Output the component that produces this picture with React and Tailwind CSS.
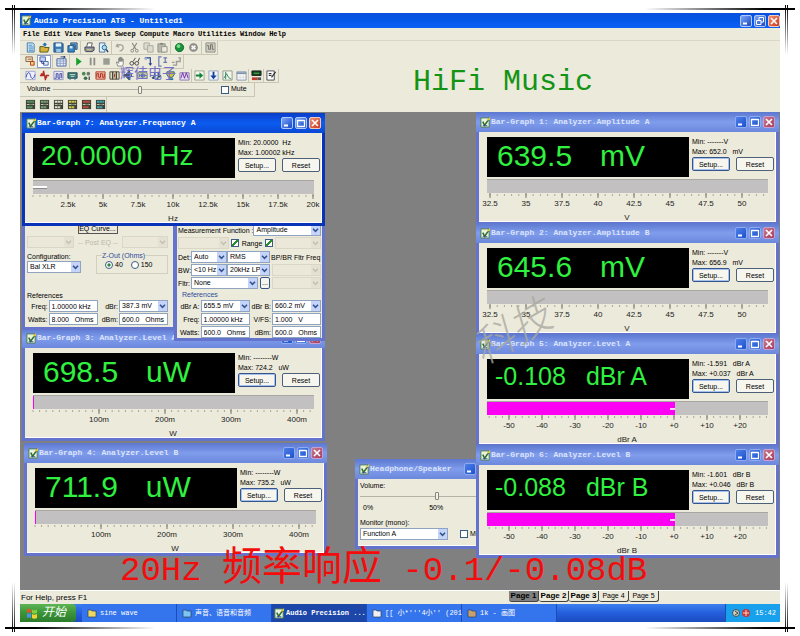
import { useState } from 'react';

// Small toolbar drawings, all on a 12x12 grid
const ICONS = {
  doc: (
    <>
      <path d="M2.5 1h6l1.5 1.5V11h-7.500z" fill="#d7ecf8" stroke="#3b76a8" />
      <path d="M4 3.500h4M4 5.500h5M4 7.500h5M4 9.500h5" stroke="#3f86c0" />
    </>
  ),
  open: (
    <>
      <path d="M1 5h4l1 1h5l-1.500 5H1z" fill="#d8b23c" stroke="#4b5a1c" />
      <path d="M5 4.500V3h-1.500L6.500 0.500 9 3H7.500v2z" fill="#2374b5" />
    </>
  ),
  save: (
    <>
      <path d="M1 1h9l1 1v9H1z" fill="#3a78b4" stroke="#1e4d7c" />
      <path d="M3 1.500h6V5H3z" fill="#e8f4fb" />
      <path d="M3.500 7.500h5V11h-5z" fill="#9cc7e2" />
    </>
  ),
  saveAll: (
    <>
      <path d="M4 1h7v7H9V3H4z" fill="#7fb2d6" stroke="#1e4d7c" />
      <path d="M1 4h7v7H1z" fill="#3a88c4" stroke="#1e4d7c" />
      <path d="M3 4.500h3V7H3z" fill="#d8eefa" />
    </>
  ),
  print: (
    <>
      <path d="M3 5l1-4h5l-1 4" fill="#fff" stroke="#555" />
      <path d="M1 5.500h10V9l-2 1.500H2L1 9z" fill="#8d93a0" stroke="#3c4150" />
      <path d="M3 8.500h5" stroke="#f0d860" />
    </>
  ),
  preview: (
    <>
      <path d="M1.500 1h6v10h-6z" fill="#e4f1fa" stroke="#4a6f96" />
      <circle cx="7" cy="6" r="2.500" fill="#a9dcf2" stroke="#246a9a" />
      <path d="M9 8l2 3" stroke="#243f5c" strokeWidth="1.500" />
    </>
  ),
  undo: <path d="M3 2L1.500 4.500 4.500 5.500M2 4.500C5 2 9 3 9 6S7 9.500 5 10" fill="none" stroke="#a5a69c" strokeWidth="1.500" />,
  cut: (
    <>
      <path d="M3.500 1l4 7M8.500 1l-4 7" stroke="#85867e" strokeWidth="1.200" />
      <circle cx="3.500" cy="9.500" r="1.500" fill="none" stroke="#85867e" />
      <circle cx="8.500" cy="9.500" r="1.500" fill="none" stroke="#85867e" />
    </>
  ),
  copy: (
    <>
      <path d="M1 1h6v7H1z" fill="#dddbce" stroke="#a9a99f" />
      <path d="M5 4h6v7H5z" fill="#dddbce" stroke="#a9a99f" />
    </>
  ),
  paste: (
    <>
      <path d="M1 2h8v9H1z" fill="#b9b8ac" stroke="#93938a" />
      <path d="M5 5h6v6H5z" fill="#eceadc" stroke="#93938a" />
      <path d="M3.500 1h3v2h-3z" fill="#85867e" />
    </>
  ),
  go: (
    <>
      <circle cx="6" cy="6" r="4.500" fill="#17913a" stroke="#0c6a2a" />
      <circle cx="5" cy="4.500" r="2" fill="#7fdc86" />
    </>
  ),
  stopRound: (
    <>
      <circle cx="6" cy="6" r="4" fill="#a4a49a" stroke="#85867e" strokeWidth="1.500" />
      <path d="M4 4l4 4M8 4l-4 4" stroke="#fff" strokeWidth="1.500" />
    </>
  ),
  gridWave: (
    <>
      <path d="M1 1h10v10H1z" fill="#cfcdc0" stroke="#8d8d84" />
      <path d="M2 4h2v4h2V3h2v5h2" fill="none" stroke="#6d6d66" />
    </>
  ),
  link: (
    <>
      <path d="M1 1h7v5H1z" fill="#f2e2c0" stroke="#8a5a3a" />
      <path d="M6 6h4v4H6z" fill="#f2d070" stroke="#b03a20" />
      <path d="M3 3.500h4" stroke="#8a5a3a" />
    </>
  ),
  linkBlue: (
    <>
      <path d="M1 1h6v5H1z" fill="#c4d0f0" stroke="#4a65a8" />
      <path d="M5 6h5v4H5z" fill="#e8eefa" stroke="#4a65a8" />
      <path d="M3 5v3h3" fill="none" stroke="#1f3e9a" />
    </>
  ),
  sheet: (
    <>
      <path d="M1 3h10v8H1z" fill="#e4ebf8" stroke="#46619c" />
      <path d="M1 5.500h10M1 8h10M4.500 3v8M8 3v8" stroke="#7087b8" strokeWidth="0.700" />
      <path d="M5 1h5l-2-1M10 1L8 2.500" stroke="#1f3e7a" fill="none" />
    </>
  ),
  play: <path d="M3.500 1.500L9.500 6l-6 4.500z" fill="#15a02c" />,
  pause: <path d="M3 2h2v8H3zM7 2h2v8H7z" fill="#8f9088" />,
  stop: <path d="M2.500 2.500h7v7h-7z" fill="#9a9b92" />,
  hand: <path d="M3 11L1.500 6.500h1L4 8V2.500h1.200V6V1.500h1.300V6V2h1.200v4V3.500H9V9l-1 2z" fill="#fafaf4" stroke="#6c6c68" strokeWidth="0.800" />,
  glasses: (
    <>
      <circle cx="3" cy="8" r="2" fill="none" stroke="#444" />
      <circle cx="8.500" cy="8" r="2" fill="none" stroke="#444" />
      <path d="M4.500 6L7 2M10 6l1.500-4M5 8h1.500" stroke="#444" />
    </>
  ),
  step: (
    <>
      <path d="M2 2h6v3M8 5v4" fill="none" stroke="#29459c" strokeWidth="1.300" />
      <path d="M6 8h4l-2 3z" fill="#29459c" />
      <circle cx="3" cy="3" r="1.500" fill="#a8b4d8" />
    </>
  ),
  bracket: <path d="M5 1H2v10h3M7 2h4M9 2v5M7 7h4" fill="none" stroke="#6a78b4" strokeWidth="1.300" />,
  jump: <path d="M2 10h4V6h4V2M8 2h3M1 7h3" fill="none" stroke="#9a9c98" strokeWidth="1.500" />,
  sine: (
    <>
      <path d="M1 1.500h10v9H1z" fill="#eef0fa" stroke="#9fa6cf" />
      <path d="M1 8C3 1 5 2 6 6s3 5 5-1" fill="none" stroke="#2f3fae" />
    </>
  ),
  spikes: <path d="M1 6h3l1-5 2 10 1-5h3M2 4l7 4" fill="none" stroke="#b52a22" strokeWidth="1.400" />,
  square: (
    <>
      <path d="M1 1.500h10v9H1z" fill="#e8e8f6" stroke="#8b90c0" />
      <path d="M1.500 9h2V4h2v5h2V4h2v5" fill="none" stroke="#3c3fa0" />
    </>
  ),
  speakerBox: (
    <>
      <path d="M1 3h10v6H1z" fill="#3d7a80" stroke="#254a50" />
      <path d="M3 5h6M4 7h4" stroke="#c9e2c2" />
      <path d="M4 9l-1 2M8 9l1 2" stroke="#2a6fa0" />
    </>
  ),
  dots: (
    <>
      <circle cx="3" cy="4" r="2" fill="#4c8a50" />
      <circle cx="8" cy="4" r="2" fill="#6c7a70" />
      <circle cx="5" cy="9" r="2" fill="#3a6f4c" />
      <path d="M9 7v4" stroke="#4d5a54" strokeWidth="1.500" />
    </>
  ),
  redWave: (
    <>
      <path d="M1 2h10v8H1z" fill="#e9bfa8" stroke="#b23c28" />
      <path d="M2 8V4h2v4h2V4h2v4h2V4" fill="none" stroke="#b2241a" />
    </>
  ),
  film: (
    <>
      <path d="M1 2h10v8H1z" fill="#e4ddc4" stroke="#4b4438" />
      <path d="M4 2v8M8 2v8" stroke="#4b4438" strokeWidth="1.500" />
      <path d="M6 4v4" stroke="#a03420" />
    </>
  ),
  horn: <path d="M1 5h2l4-4v10L3 7H1zM8.500 4c1 1 1 3 0 4" fill="#445a68" stroke="#2b3d48" />,
  digits: (
    <>
      <path d="M1 3h10v6H1z" fill="#dfe4dc" stroke="#667060" />
      <path d="M3 4.500v3M5 4.500h1.500v3H5zM8.500 4.500v3" fill="none" stroke="#22553a" />
    </>
  ),
  beads: <path d="M1 9l3-2M4 3v5M8 2v6M8 8l3-2M2 9h2M6 9h2" stroke="#2a5560" strokeWidth="1.600" />,
  yellowBox: (
    <>
      <path d="M2 2h8v3l-2 3H4L2 5z" fill="#d8c23c" stroke="#235a8c" />
      <path d="M4 9h5v2H4z" fill="#356f9e" />
    </>
  ),
  purpleWave: (
    <>
      <path d="M1 3h10v8H1z" fill="#e6dcf2" stroke="#8a78b4" />
      <path d="M2 9l2-6 2 6 2-6 2 6" fill="none" stroke="#6b2f9c" />
    </>
  ),
  right: (
    <>
      <path d="M1 1h10v10H1z" fill="#f4f6ea" stroke="#97a58a" />
      <path d="M2 5h4V2.500L10 6 6 9.500V7H2z" fill="#14813a" />
    </>
  ),
  down: (
    <>
      <path d="M1 1h10v10H1z" fill="#eef3fa" stroke="#94a4bd" />
      <path d="M5 2v4H2.500L6 10l3.500-4H7V2z" fill="#123f98" />
    </>
  ),
  graph: (
    <>
      <path d="M1 1h10v10H1z" fill="#f3f5ee" stroke="#8f9b88" />
      <path d="M2 9l3-5 2 4 3 2M4 2v8" fill="none" stroke="#2f8454" />
    </>
  ),
  table: (
    <>
      <path d="M1 2h10v9H1z" fill="#fbfbf6" stroke="#8292ac" />
      <path d="M1 3.500h10" stroke="#8292ac" strokeWidth="2" />
      <path d="M4.500 5v6M8 5v6M1 8h10" stroke="#cdd2da" strokeWidth="0.700" />
    </>
  ),
  meter: (
    <>
      <path d="M1 1h10v5H1z" fill="#14441c" stroke="#222" />
      <path d="M3 3.500h6" stroke="#54c85c" />
      <path d="M1 8h6v3H1z" fill="#c43a2c" />
      <path d="M7 8h4v3H7z" fill="#555" />
    </>
  ),
  note: (
    <>
      <path d="M1 1h8v10H1z" fill="#fff" stroke="#45484c" />
      <path d="M3 4h3M3 6h3M10.500 2L6 8" stroke="#30343a" strokeWidth="1.300" />
    </>
  ),
};

function Icon({ name }) {
  return (
    <svg viewBox="0 0 12 12" className="h-[11px] w-[11px]" aria-hidden="true">
      {ICONS[name]}
    </svg>
  );
}

function PanelIcon({ accent }) {
  return (
    <svg viewBox="0 0 12 12" className="h-[11px] w-[11px]" aria-hidden="true">
      <path d="M1 1h10v10H1z" fill="#3c4036" />
      <path d="M2 3h8M2 9h6" stroke={accent} strokeWidth="2" />
      <path d="M2 6h4M7 6h3" stroke="#c9d4b8" />
      <path d="M5 1v10M8 1v10" stroke="#59604f" strokeWidth="0.700" />
    </svg>
  );
}

function AppIcon() {
  return (
    <svg viewBox="0 0 12 12" className="h-[11px] w-[11px] shrink-0" aria-hidden="true">
      <path d="M1 1h9v10H1z" fill="#e9f2dc" stroke="#4a7a4e" />
      <path d="M3 5l2 4 5-7" fill="none" stroke="#2d6a34" strokeWidth="1.600" />
      <path d="M7 4l4-4v3z" fill="#f0c830" />
      <path d="M3 9.500h5" stroke="#2b4f9c" />
    </svg>
  );
}

const TOOLBARS = {
  file: [
    ['doc', 'open', 'save', 'saveAll'],
    ['print', 'preview'],
    ['undo', 'cut', 'copy', 'paste'],
    ['go', 'stopRound'],
    ['gridWave'],
  ],
  sweep: [
    ['link', 'linkBlue'],
    ['sheet'],
    ['play', 'pause', 'stop', 'hand', 'glasses', 'step', 'bracket', 'jump'],
  ],
  panels: [
    ['sine', 'spikes', 'square', 'speakerBox', 'dots', 'redWave', 'film', 'horn', 'digits', 'beads', 'yellowBox', 'purpleWave'],
    ['right', 'down', 'graph', 'table'],
    ['meter'],
    ['note'],
  ],
};

function Toolbar({ groups, active, tight }) {
  return (
    <div className={`flex h-[14px] w-max items-center border-r border-b border-[#c9c6b4] pl-[3px] ${tight ? '' : 'gap-px'}`}>
      {groups.map((group, i) => (
        <div
          key={i}
          className={`flex items-center ${i > 0 ? 'border-l border-[#c9c6b4]' : ''} ${i > 0 && !tight ? 'pl-px' : ''}`}
        >
          {group.map((name) => (
            <button
              key={name}
              type="button"
              aria-label={name}
              className={`flex h-[13px] w-[14px] items-center justify-center ${
                name === active ? 'border border-[#8a9cc8] bg-white' : ''
              }`}
            >
              <Icon name={name} />
            </button>
          ))}
        </div>
      ))}
    </div>
  );
}

function CaptionButtons({ active, restore }) {
  const blue = active
    ? 'bg-linear-to-br from-[#7ea6f8] to-[#1746c4] border-[#b4c8f8]'
    : 'bg-linear-to-br from-[#4f80e8] to-[#1c50cc] border-[#8eaaf0]';
  const red = active
    ? 'bg-linear-to-br from-[#f09070] to-[#c83418] border-[#f4c8bc]'
    : 'bg-linear-to-br from-[#c87890] to-[#a83c5c] border-[#c8a0d0]';
  return (
    <div className="flex shrink-0 gap-[2px]">
      <button type="button" aria-label="Minimize" className={`h-3 w-3 rounded-[2px] border ${blue}`}>
        <svg viewBox="0 0 10 10" aria-hidden="true"><path d="M2 7.500h4" stroke="#fff" strokeWidth="2" /></svg>
      </button>
      <button type="button" aria-label="Maximize" className={`h-3 w-3 rounded-[2px] border ${blue}`}>
        <svg viewBox="0 0 10 10" fill="none" stroke="#fff" aria-hidden="true">
          {restore ? (
            <path d="M4 4V1.500h4.500V6H6M1.500 4.500H6V8.500H1.500z" />
          ) : (
            <path d="M1.500 2.500h7M1.500 2v6.500h7V2" strokeWidth="1.300" />
          )}
        </svg>
      </button>
      <button type="button" aria-label="Close" className={`h-3 w-3 rounded-[2px] border ${red}`}>
        <svg viewBox="0 0 10 10" aria-hidden="true"><path d="M2 2l6 6M8 2L2 8" stroke="#fff" strokeWidth="1.600" /></svg>
      </button>
    </div>
  );
}

function Window({ title, active, className, children }) {
  return (
    <section
      className={`absolute border-x-[3px] border-b-[3px] ${
        active ? 'border-[#0a34b8]' : 'border-[#6474cc]'
      } ${className}`}
    >
      <header
        className={`-mx-[3px] flex h-5 items-center pr-1 pl-1 font-['Liberation_Mono',monospace] text-[8px] font-bold ${
          active
            ? 'bg-linear-to-b from-[#0a3cc8] via-[#0c5cf0] to-[#0a48d4] text-white'
            : 'bg-linear-to-b from-[#5c78d0] via-[#809cec] to-[#6c88dc] text-[#dce4fc]'
        }`}
      >
        <AppIcon />
        <h2 className="flex-1 whitespace-nowrap">{title}</h2>
        <CaptionButtons active={active} />
      </header>
      <div className="border-r border-b border-white bg-[#eceadb]">{children}</div>
    </section>
  );
}

// Ruler under a bar: major ticks carry labels, minor ticks split each step
function Scale({ labels, start, step, minor, unit }) {
  const gap = step / minor;
  const ticks = [];
  for (let x = start % gap; x <= 281; x += gap) ticks.push(x);
  return (
    <svg viewBox="0 0 281 28" className="block w-[281px] overflow-visible font-['Liberation_Sans',sans-serif] text-[8px]">
      {ticks.map((x) => (
        <path key={x} d={`M${x} 1v2`} stroke="#a8a698" strokeWidth="1" />
      ))}
      {labels.map((label, i) => (
        <g key={label}>
          <path d={`M${start + i * step} 0v5`} stroke="#77766c" strokeWidth="1" />
          <text x={start + i * step} y="13" textAnchor="middle" fill="#222">{label}</text>
        </g>
      ))}
      <text x="140" y="27" textAnchor="middle" fill="#222">{unit}</text>
    </svg>
  );
}

const SCALES = {
  hz: { labels: ['2.5k', '5k', '7.5k', '10k', '12.5k', '15k', '17.5k', '20k'], start: 35, step: 35, minor: 5, unit: 'Hz' },
  volt: { labels: ['32.5', '35', '37.5', '40', '42.5', '45', '47.5', '50'], start: 3, step: 36, minor: 5, unit: 'V' },
  watt: { labels: ['100m', '200m', '300m', '400m'], start: 66, step: 66, minor: 10, unit: 'W' },
  dbrA: { labels: ['-50', '-40', '-30', '-20', '-10', '+0', '+10', '+20'], start: 22, step: 33, minor: 5, unit: 'dBr A' },
  dbrB: { labels: ['-50', '-40', '-30', '-20', '-10', '+0', '+10', '+20'], start: 22, step: 33, minor: 5, unit: 'dBr B' },
};

function PushButton({ children, focused }) {
  return (
    <button
      type="button"
      className={`h-[14px] w-[38px] rounded-[2px] border bg-[#f6f5ee] text-center leading-[11px] ${
        focused ? 'border-[#34558c] ring-1 ring-[#a8c0ec] ring-inset' : 'border-[#4c6078]'
      }`}
    >
      {children}
    </button>
  );
}

function BarGraph({ title, active, value, unit, size, min, max, scale, fill = 0, mark, className }) {
  const sizes = {
    md: 'text-[25px] pl-2 gap-5 leading-[34px]',
    lg: 'text-[28px] pl-2 gap-[17px] leading-[36px]',
    xl: 'text-[30px] pl-[10px] gap-7 leading-[38px]',
  };
  return (
    <Window title={title} active={active} className={`w-[303px] ${className}`}>
      <div className="pt-[5px] pr-px pl-2">
        <div className="flex gap-[3px]">
          <output className={`flex h-10 flex-1 bg-black whitespace-pre text-[#30f040] ${sizes[size]}`}>
            <span>{value}</span>
            <span>{unit}</span>
          </output>
          <div className="w-[82px] text-[7px] leading-[10px]">
            <p className="whitespace-pre">Min: {min}</p>
            <p className="whitespace-pre">Max: {max}</p>
            <div className="flex justify-between">
              <PushButton focused={!active}>Setup...</PushButton>
              <PushButton>Reset</PushButton>
            </div>
          </div>
        </div>
        <div className="mt-[2px] flex h-[14px] w-[281px] items-center border-t border-[#a8a6a0] bg-[#c2c0c0]">
          <div className="flex h-full items-center justify-end bg-[#fc00f4]" style={{ width: `${fill}%` }}>
            {fill > 5 && <span className="h-[2px] w-[5px] bg-[#fcd0fc]" />}
          </div>
          {mark && <span className="h-[3px] w-[14px] border-b border-[#8c8c88] bg-white" />}
        </div>
        <Scale {...scale} />
      </div>
    </Window>
  );
}

function Select({ label, value, disabled, className }) {
  return (
    <span className={`relative inline-flex h-[12px] ${className}`}>
      <select
        aria-label={label}
        disabled={disabled}
        className={`h-full w-full appearance-none overflow-hidden border pl-[2px] leading-[10px] ${
          disabled ? 'border-[#dad7c6] bg-[#ebe8da]' : 'border-[#8ea4c0] bg-white'
        }`}
      >
        <option>{value}</option>
      </select>
      <span
        className={`pointer-events-none absolute inset-y-px right-px flex w-[9px] items-center justify-center ${
          disabled ? 'bg-[#e4e1d2] text-[#c4c1b2]' : 'bg-[#c4d4fa] text-[#34508c]'
        }`}
      >
        <svg viewBox="0 0 8 6" className="h-[5px] w-[7px]" aria-hidden="true">
          <path d="M1 1l3 3 3-3" fill="none" stroke="currentColor" strokeWidth="1.800" />
        </svg>
      </span>
    </span>
  );
}

function Field({ label, value, select }) {
  return (
    <label className="flex items-center justify-end gap-px">
      <span className="whitespace-nowrap">{label}</span>
      {select ? (
        <Select label={label} value={value} className="w-[49px]" />
      ) : (
        <input defaultValue={value} className="h-[12px] w-[49px] border border-[#8ea4c0] bg-white pl-[2px]" />
      )}
    </label>
  );
}

function Tick({ label }) {
  return (
    <input
      type="checkbox"
      aria-label={label}
      defaultChecked
      className="h-2 w-2 appearance-none border border-[#3c5c88] bg-white checked:bg-[linear-gradient(135deg,#fff_35%,#2c8c34_35%,#2c8c34_60%,#fff_60%)]"
    />
  );
}

function GeneratorPanel() {
  return (
    <section className="absolute top-[106px] left-[2px] flex w-[154px] flex-col border-x-[3px] border-b-[3px] border-[#6474cc] bg-[#eceadb] pt-[6px] pr-[5px] pb-[2px] pl-[2px] text-[7px] leading-[9px]">
      <button type="button" className="mx-auto h-[10px] w-[40px] border border-[#555] leading-[8px] whitespace-nowrap">EQ Curve...</button>
      <div className="mt-[2px] flex items-center gap-1 text-[#bbb8a8]">
        <Select label="EQ source" value="" disabled className="w-[51px]" />
        <span className="flex-1 text-center whitespace-nowrap">-- Post EQ --</span>
        <Select label="Post EQ" value="" disabled className="w-[50px]" />
      </div>
      <div className="mt-1 flex justify-between">
        <label className="flex flex-col">
          Configuration:
          <Select label="Configuration" value="Bal XLR" className="w-[54px]" />
        </label>
        <fieldset className="h-[22px] w-[72px] border border-[#d2cfbe] pl-1">
          <legend className="ml-px h-[7px] leading-[7px] text-[#2c4c9c]">Z-Out (Ohms)</legend>
          <div className="flex gap-2 pt-px pl-1">
            <label className="flex items-center gap-[2px]">
              <input type="radio" name="zout" defaultChecked className="h-2 w-2 appearance-none rounded-full border border-[#3c5c88] bg-white checked:bg-[radial-gradient(#2c8c34_35%,#fff_40%)]" />
              40
            </label>
            <label className="flex items-center gap-[2px]">
              <input type="radio" name="zout" className="h-2 w-2 appearance-none rounded-full border border-[#3c5c88] bg-white" />
              150
            </label>
          </div>
        </fieldset>
      </div>
      <p className="mt-[17px]">References</p>
      <div className="grid grid-cols-2 gap-y-px">
        <Field label="Freq:" value="1.00000 kHz" />
        <Field label="dBr:" value="387.3  mV" select />
        <Field label="Watts:" value="8.000   Ohms" />
        <Field label="dBm:" value="600.0   Ohms" />
      </div>
    </section>
  );
}

function AnalyzerPanel() {
  return (
    <section className="absolute top-[109px] left-[154px] flex w-[151px] flex-col gap-px border-x-[3px] border-b-[3px] border-[#6474cc] bg-[#eceadb] pt-[3px] pr-px pl-px text-[7px] leading-[9px]">
      <label className="flex items-center justify-between whitespace-nowrap">
        Measurement Function :
        <Select label="Measurement function" value="Amplitude" className="w-[68px]" />
      </label>
      <div className="flex items-center justify-between">
        <Select label="Left range" value="" disabled className="w-[51px]" />
        <div className="flex items-center gap-[3px]">
          <Tick label="Auto range A" />
          Range
          <Tick label="Auto range B" />
        </div>
        <Select label="Right range" value="" disabled className="w-[46px]" />
      </div>
      <div className="mt-px grid grid-cols-[13px_36px_43px_1fr] items-center gap-y-px">
        <span>Det:</span>
        <Select label="Detector" value="Auto" className="w-[36px]" />
        <Select label="Detector type" value="RMS" className="w-[43px]" />
        <span className="pl-px whitespace-nowrap">BP/BR Fltr Freq</span>
        <span>BW:</span>
        <Select label="Low bandwidth" value="<10 Hz" className="w-[36px]" />
        <Select label="High bandwidth" value="20kHz LP" className="w-[43px]" />
        <Select label="Filter frequency" value="" disabled className="ml-[2px]" />
        <span>Fltr:</span>
        <div className="col-span-2 flex gap-[2px]">
          <Select label="Filter" value="None" className="w-[67px]" />
          <button type="button" className="h-[12px] w-[10px] rounded-[2px] border border-[#34558c] bg-[#f6f5ee] leading-[6px]">...</button>
        </div>
        <Select label="Filter slot" value="" disabled className="ml-[2px]" />
      </div>
      <p className="pl-1 text-[#2c4c9c]">References</p>
      <div className="grid grid-cols-2 gap-y-px">
        <Field label="dBr A:" value="655.5  mV" select />
        <Field label="dBr B:" value="660.2  mV" select />
        <Field label="Freq:" value="1.00000 kHz" />
        <Field label="V/FS:" value="1.000   V" />
        <Field label="Watts:" value="600.0   Ohms" />
        <Field label="dBm:" value="600.0   Ohms" />
      </div>
    </section>
  );
}

const RANGE =
  'h-[10px] appearance-none bg-[linear-gradient(#b4b2a4,#b4b2a4)] bg-size-[100%_1px] bg-center bg-no-repeat [&::-webkit-slider-thumb]:h-[8px] [&::-webkit-slider-thumb]:w-[4px] [&::-webkit-slider-thumb]:appearance-none [&::-webkit-slider-thumb]:rounded-[1px] [&::-webkit-slider-thumb]:border [&::-webkit-slider-thumb]:border-[#84847c] [&::-webkit-slider-thumb]:bg-[#f4f3ea]';

function HeadphoneWindow() {
  return (
    <Window title="Headphone/Speaker" className="top-[347px] left-[335px] w-[153px]">
      <div className="h-[66px] px-[2px] pt-[2px] text-[7px] leading-[10px]">
        <label htmlFor="hp-volume">Volume:</label>
        <input id="hp-volume" type="range" defaultValue="54" className={`block w-full ${RANGE}`} />
        <div className="flex gap-14 pt-[2px] pl-[3px]">
          <span>0%</span>
          <span>50%</span>
        </div>
        <p className="mt-[5px]">Monitor (mono):</p>
        <div className="flex items-center gap-3">
          <Select label="Monitor" value="Function A" className="w-[88px]" />
          <label className="flex items-center gap-[2px]">
            <input type="checkbox" className="h-2 w-2 shrink-0 appearance-none border border-[#3c5c88] bg-white" />
            Mute
          </label>
        </div>
      </div>
    </Window>
  );
}

// Crossed rules that fade out from each corner of the sheet
function Corner({ className }) {
  return (
    <div className={`pointer-events-none absolute h-[60px] w-[150px] ${className}`}>
      <div className="absolute top-[3px] left-0 h-[2px] w-full bg-linear-to-r from-black from-20% to-transparent" />
      <div className="absolute top-0 left-[7px] h-[50px] w-px bg-linear-to-b from-black to-transparent" />
      <div className="absolute top-0 left-[9px] h-[50px] w-px bg-linear-to-b from-black to-transparent" />
    </div>
  );
}

const MENUS = ['File', 'Edit', 'View', 'Panels', 'Sweep', 'Compute', 'Macro', 'Utilities', 'Window', 'Help'];

const TASKS = [
  { label: 'sine wave', icon: '#f0d860' },
  { label: '声音、语音和音频', icon: '#7cc4f4' },
  { label: 'Audio Precision ...', app: true },
  { label: "[[ 小*'''4小'' (201", icon: '#f0f0f0' },
  { label: '1k - 画图', icon: '#c8a070' },
];

function TaskBar() {
  return (
    <nav className="flex h-[18px] items-stretch bg-linear-to-b from-[#3c80f0] via-[#245edc] to-[#1c4cc0] font-['Liberation_Mono','Noto_Sans_CJK_SC',monospace] text-[7px] text-white">
      <button type="button" className="flex w-[56px] items-center gap-1 rounded-r-[4px] bg-linear-to-b from-[#5cb454] via-[#3c9438] to-[#2c7c2c] pl-[6px] text-[12px] leading-none italic">
        <svg viewBox="0 0 12 12" className="h-3 w-3" aria-hidden="true">
          <path d="M1 2.500Q3 1 5 2.500V6Q3 4.500 1 6z" fill="#e8502c" />
          <path d="M6 2.500q2 1.500 5 0V6Q8 7.500 6 6z" fill="#80d040" />
          <path d="M1 7q2-1.500 4 0v4Q3 9.500 1 11z" fill="#4c90f0" />
          <path d="M6 7q2 1.500 5 0v4q-3 1.500-5 0z" fill="#f4d030" />
        </svg>
        开始
      </button>
      <div className="flex flex-1 pl-[6px]">
        {TASKS.map((task) => (
          <button
            key={task.label}
            type="button"
            className={`flex w-[95px] items-center border-r border-[#1c4cb4] whitespace-nowrap ${
              task.app ? 'gap-px bg-[#1c46a8] pl-[2px] font-bold' : 'gap-[3px] bg-[#3474ec] pl-[5px]'
            }`}
          >
            {task.app ? (
              <AppIcon />
            ) : (
              <svg viewBox="0 0 10 10" className="h-[10px] w-[10px] shrink-0" aria-hidden="true">
                <path d="M1 2h3l1 1h4v6H1z" fill={task.icon} stroke="#2c4460" strokeWidth="0.700" />
              </svg>
            )}
            {task.label}
          </button>
        ))}
      </div>
      <div className="flex w-[55px] items-center gap-[3px] border-l border-[#1450a8] bg-[#18a0ec] pl-[6px]">
        <svg viewBox="0 0 20 10" className="h-[10px] w-[20px]" aria-hidden="true">
          <circle cx="4" cy="5" r="3.500" fill="#c8d0c0" stroke="#41505c" />
          <path d="M3 3l3 2-3 2" fill="none" stroke="#3a4048" />
          <circle cx="14" cy="5" r="4" fill="#c83838" />
          <path d="M14 2v6M11 5h6" stroke="#f4d8d0" />
        </svg>
        <time>15:42</time>
      </div>
    </nav>
  );
}

function StatusBar({ page, onPage }) {
  return (
    <footer className="flex h-[14px] items-start border-t border-white bg-[#eceadb] text-[8px] leading-[13px]">
      <span className="w-[489px] pl-px">For Help, press F1</span>
      {[1, 2, 3, 4, 5].map((n) => (
        <button
          key={n}
          type="button"
          onClick={() => onPage(n)}
          className={`h-[11px] w-[30px] rounded-b-[3px] border-r border-b border-[#444] leading-[10px] ${
            n === page ? 'bg-[#808080]' : ''
          } ${n < 4 ? 'text-[8px] font-bold' : 'text-[7px]'}`}
        >
          Page {n}
        </button>
      ))}
    </footer>
  );
}

export default function App() {
  const [page, setPage] = useState(1);

  return (
    <div className="relative flex min-h-screen flex-col overflow-hidden bg-white px-5 pt-[13px] pb-[14px] font-['Liberation_Sans','Noto_Sans_CJK_SC',sans-serif] text-black">
      <Corner className="top-[5px] left-[5px]" />
      <Corner className="top-[5px] right-[5px] -scale-x-100" />
      <Corner className="bottom-[4px] left-[5px] -scale-y-100" />
      <Corner className="right-[5px] bottom-[4px] -scale-100" />

      <header className="flex h-[15px] items-center gap-[2px] bg-linear-to-b from-[#0a50dc] via-[#0458e8] to-[#0c60f4] pl-px font-['Liberation_Mono',monospace] text-[8px] font-bold text-white">
        <AppIcon />
        <h1 className="flex-1">Audio Precision ATS - Untitled1</h1>
        <CaptionButtons active restore />
      </header>

      <div className="relative bg-[#eceadb]">
        <nav className="flex h-[13px] items-center gap-1 border-b border-[#dad7c8] pl-[3px] font-['Liberation_Mono',monospace] text-[7px] font-bold">
          {MENUS.map((menu) => (
            <button key={menu} type="button">{menu}</button>
          ))}
        </nav>
        <Toolbar groups={TOOLBARS.file} />
        <Toolbar groups={TOOLBARS.sweep} active="linkBlue" />
        <Toolbar groups={TOOLBARS.panels} tight />
        <div className="flex h-[14px] w-[235px] items-center border-r border-b border-[#c9c6b4] pl-[7px] text-[7px]">
          <label htmlFor="volume" className="w-[26px]">Volume</label>
          <input id="volume" type="range" defaultValue="56" className={`w-[155px] ${RANGE}`} />
          <label className="ml-[13px] flex items-center gap-[2px]">
            <input type="checkbox" className="h-2 w-2 appearance-none border border-[#3c5c88] bg-white" />
            Mute
          </label>
        </div>
        <div className="flex h-[15px] w-[87px] items-center gap-[3px] border-r border-[#c9c6b4] pl-[5px]">
          {['#5c9464', '#78a478', '#e4e4d4', '#d8d040', '#d04838', '#38a8b8'].map((accent) => (
            <button key={accent} type="button" aria-label="Panel page"><PanelIcon accent={accent} /></button>
          ))}
        </div>
        <p className="absolute top-[37px] left-[100px] font-['Noto_Sans_CJK_SC',sans-serif] text-[14px] leading-none text-[#7470c8]">辉佳电子</p>
        <p className="absolute top-[36px] left-[393px] font-['Liberation_Mono',monospace] text-[30px] leading-9 text-[#149414]">HiFi Music</p>
      </div>

      <main className="relative min-h-[478px] flex-1 overflow-hidden bg-[#808080]">
        <BarGraph title="Bar-Graph 3: Analyzer.Level A" value="698.5" unit="uW" size="xl" min="--------W" max="724.2   uW" scale={SCALES.watt} fill={0.4} className="top-[216px] left-[2px]" />
        <GeneratorPanel />
        <AnalyzerPanel />
        <BarGraph active title="Bar-Graph 7: Analyzer.Frequency A" value="20.0000" unit="Hz" size="lg" min="20.0000  Hz" max="1.00002 kHz" scale={SCALES.hz} mark className="top-px left-[2px]" />
        <BarGraph title="Bar-Graph 4: Analyzer.Level B" value="711.9" unit="uW" size="xl" min="--------W" max="735.2   uW" scale={SCALES.watt} fill={0.4} className="top-[331px] left-1" />
        <HeadphoneWindow />
        <BarGraph title="Bar-Graph 1: Analyzer.Amplitude A" value="639.5" unit="mV" size="xl" min="-------V" max="652.0   mV" scale={SCALES.volt} className="top-0 right-px" />
        <BarGraph title="Bar-Graph 2: Analyzer.Amplitude B" value="645.6" unit="mV" size="xl" min="-------V" max="656.9   mV" scale={SCALES.volt} className="top-[111px] right-px" />
        <BarGraph title="Bar-Graph 5: Analyzer.Level A" value="-0.108" unit="dBr A" size="md" min="-1.591   dBr A" max="+0.037   dBr A" scale={SCALES.dbrA} fill={67} className="top-[222px] right-px" />
        <BarGraph title="Bar-Graph 6: Analyzer.Level B" value="-0.088" unit="dBr B" size="md" min="-1.601   dBr B" max="+0.046   dBr B" scale={SCALES.dbrB} fill={67} className="top-[333px] right-px" />

        <p className="pointer-events-none absolute top-[196px] left-[448px] -rotate-30 font-['Noto_Sans_CJK_SC',sans-serif] text-[42px] leading-none font-light text-[#a8a8a0]/80 italic">科技</p>
        <p className="absolute top-[436px] left-[100px] font-['Liberation_Mono','Noto_Sans_CJK_SC',monospace] text-[34px] leading-[44px] whitespace-pre text-[#f40c0c]">
          20Hz <span className="text-[40px]">频率响应</span> -0.1/-0.08dB
        </p>
      </main>

      <StatusBar page={page} onPage={setPage} />
      <TaskBar />
    </div>
  );
}
